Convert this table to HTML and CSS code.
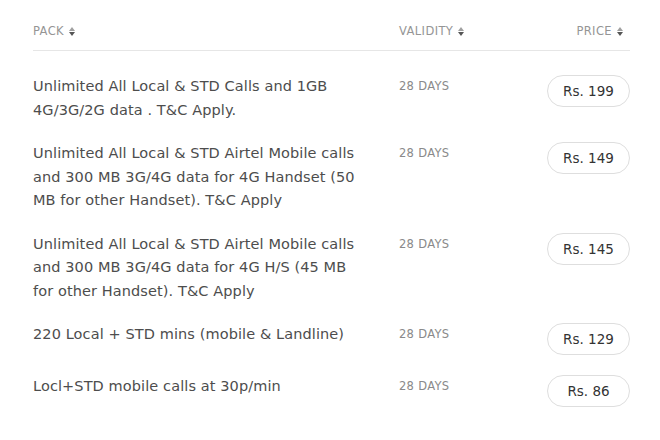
FILE: index.html
```html
<!DOCTYPE html>
<html>
<head>
<meta charset="utf-8">
<link rel="stylesheet" href="styles.css">
</head>
<body>
<div class="packs">
  <div class="head">
    <div class="th">PACK <span class="sort"><i class="up"></i><i class="down"></i></span></div>
    <div class="th">VALIDITY <span class="sort"><i class="up"></i><i class="down"></i></span></div>
    <div class="th th-right">PRICE <span class="sort"><i class="up"></i><i class="down"></i></span></div>
  </div>
  <div class="list">
    <div class="row">
      <div class="desc">Unlimited All Local &amp; STD Calls and 1GB 4G/3G/2G data . T&amp;C Apply.</div>
      <div class="validity">28 DAYS</div>
      <div class="price"><span class="pill">Rs. 199</span></div>
    </div>
    <div class="row">
      <div class="desc">Unlimited All Local &amp; STD Airtel Mobile calls and 300 MB 3G/4G data for 4G Handset (50 MB for other Handset). T&amp;C Apply</div>
      <div class="validity">28 DAYS</div>
      <div class="price"><span class="pill">Rs. 149</span></div>
    </div>
    <div class="row">
      <div class="desc">Unlimited All Local &amp; STD Airtel Mobile calls and 300 MB 3G/4G data for 4G H/S (45 MB for other Handset). T&amp;C Apply</div>
      <div class="validity">28 DAYS</div>
      <div class="price"><span class="pill">Rs. 145</span></div>
    </div>
    <div class="row">
      <div class="desc">220 Local + STD mins (mobile &amp; Landline)</div>
      <div class="validity">28 DAYS</div>
      <div class="price"><span class="pill">Rs. 129</span></div>
    </div>
    <div class="row">
      <div class="desc">Locl+STD mobile calls at 30p/min</div>
      <div class="validity">28 DAYS</div>
      <div class="price"><span class="pill">Rs. 86</span></div>
    </div>
  </div>
</div>
</body>
</html>
```
FILE: styles.css
```css
html, body {
  margin: 0;
  padding: 0;
  background: #ffffff;
}
body {
  font-family: "DejaVu Sans", "Open Sans", sans-serif;
  color: #4d4d4d;
}
.packs {
  width: 597px;
  margin-left: 33px;
}
.head, .row {
  display: grid;
  grid-template-columns: 325px 1fr 84px;
  column-gap: 41px;
}
.head {
  padding: 24px 0 12px;
  border-bottom: 1px solid #e6e6e6;
}
.th {
  font-size: 11.5px;
  line-height: 14px;
  color: #959595;
  letter-spacing: 0.4px;
  display: flex;
  align-items: center;
  gap: 5px;
}
.th-right {
  justify-content: flex-end;
  padding-right: 7px;
}
.sort {
  display: inline-flex;
  flex-direction: column;
  gap: 1px;
}
.sort i {
  display: block;
  width: 0;
  height: 0;
  border-left: 3px solid transparent;
  border-right: 3px solid transparent;
}
.sort .up {
  border-bottom: 4px solid #a0a0a0;
}
.sort .down {
  border-top: 4px solid #555555;
}
.list {
  padding-top: 14px;
}
.row {
  padding: 10px 0;
}
.desc {
  font-size: 14.5px;
  line-height: 23.5px;
  letter-spacing: 0.1px;
  color: #4d4d4d;
}
.validity {
  font-size: 11.5px;
  line-height: 23.5px;
  color: #8a8a8a;
  letter-spacing: 0.3px;
}
.price {
  display: flex;
  justify-content: flex-end;
  align-items: flex-start;
}
.pill {
  box-sizing: border-box;
  width: 83px;
  height: 32px;
  border: 1px solid #dedede;
  border-radius: 16px;
  display: flex;
  align-items: center;
  justify-content: center;
  font-size: 13.5px;
  color: #333333;
}
```
